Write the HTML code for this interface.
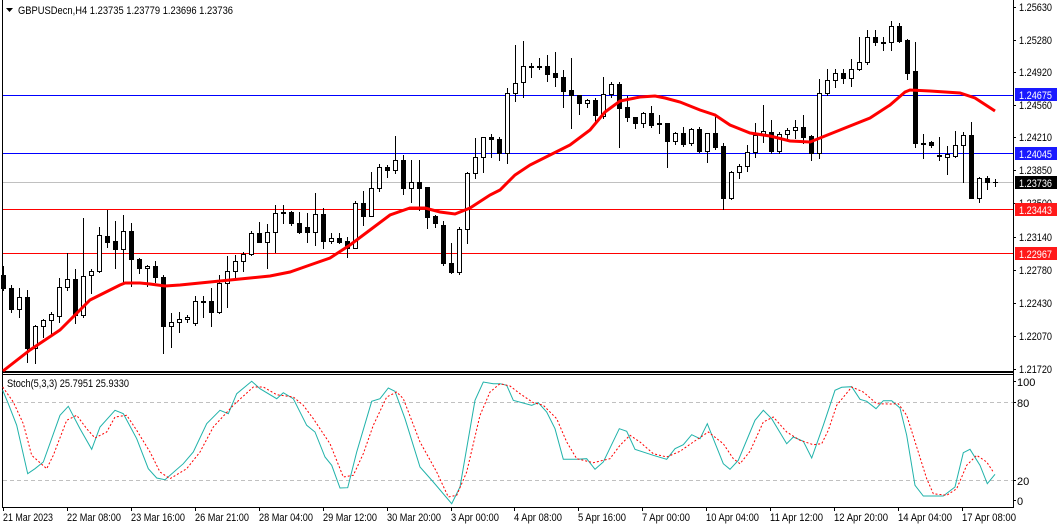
<!DOCTYPE html>
<html><head><meta charset="utf-8"><style>
html,body{margin:0;padding:0;background:#fff;width:1059px;height:528px;overflow:hidden}
svg{display:block;font-family:"Liberation Sans",sans-serif;font-size:11px}
</style></head><body>
<svg id="s" width="1059" height="528" xmlns="http://www.w3.org/2000/svg">
<rect x="0" y="0" width="1059" height="528" fill="#fff"/>
<g shape-rendering="crispEdges">
<line x1="2.5" y1="0" x2="2.5" y2="507" stroke="#000"/>
<line x1="1013.5" y1="0" x2="1013.5" y2="507" stroke="#000"/>
<line x1="2" y1="372" x2="1014" y2="372" stroke="#000" stroke-width="2"/>
<line x1="2" y1="374.5" x2="1014" y2="374.5" stroke="#000" stroke-width="1"/>
<line x1="2" y1="507.5" x2="1014" y2="507.5" stroke="#000"/>
<line x1="3" y1="95.5" x2="1013" y2="95.5" stroke="#0000ff"/>
<line x1="3" y1="153.5" x2="1013" y2="153.5" stroke="#0000ff"/>
<line x1="3" y1="182.5" x2="1013" y2="182.5" stroke="#c0c0c0"/>
<line x1="3" y1="209.5" x2="1013" y2="209.5" stroke="#ff0000"/>
<line x1="3" y1="253.5" x2="1013" y2="253.5" stroke="#ff0000"/>
</g>
<g id="candles" shape-rendering="crispEdges"></g>
<polyline fill="none" stroke="#ff0000" stroke-width="3" points="3,371 30,350 60,330 90,300 110,290 120,285 125,283 140,283 150,284 165,286 180,285 210,282 230,280 250,278 270,276 290,272 310,265 330,258 350,245 370,230 390,215 410,208 425,208 440,212 455,214 470,208 490,195 500,190 515,175 530,165 550,155 570,145 590,130 605,112 620,101 640,97 655,96 665,98 680,102 700,110 715,115 730,125 750,133 770,136 790,141 810,142 820,138 840,130 870,118 890,105 905,92 910,90 930,91 960,93 975,98 995,111"/>
<polygon points="6,8 13,8 9.5,12" fill="#000"/>
<text x="18" y="14" fill="#000" textLength="215" lengthAdjust="spacingAndGlyphs">GBPUSDecn,H4  1.23735 1.23779 1.23696 1.23736</text>
<g fill="#000" id="pax"></g>
<rect x="1015" y="88" width="42" height="13" fill="#1a1aff"/>
<text x="1019" y="99" fill="#fff" textLength="33" lengthAdjust="spacingAndGlyphs">1.24675</text>
<rect x="1015" y="147" width="42" height="13" fill="#1a1aff"/>
<text x="1019" y="158" fill="#fff" textLength="33" lengthAdjust="spacingAndGlyphs">1.24045</text>
<rect x="1015" y="176" width="42" height="13" fill="#000"/>
<text x="1019" y="187" fill="#fff" textLength="33" lengthAdjust="spacingAndGlyphs">1.23736</text>
<rect x="1015" y="203" width="42" height="13" fill="#ff1a1a"/>
<text x="1019" y="214" fill="#fff" textLength="33" lengthAdjust="spacingAndGlyphs">1.23443</text>
<rect x="1015" y="247" width="42" height="13" fill="#ff1a1a"/>
<text x="1019" y="258" fill="#fff" textLength="33" lengthAdjust="spacingAndGlyphs">1.22967</text>
<g shape-rendering="crispEdges">
<line x1="3" y1="402.5" x2="1013" y2="402.5" stroke="#c0c0c0" stroke-dasharray="4,3"/>
<line x1="3" y1="480.5" x2="1013" y2="480.5" stroke="#c0c0c0" stroke-dasharray="4,3"/>
</g>
<text x="7" y="387" fill="#000" textLength="122" lengthAdjust="spacingAndGlyphs">Stoch(5,3,3) 25.7951 25.9330</text>
<polyline id="teal" fill="none" stroke="#20b2aa" stroke-width="1"/>
<polyline id="red" fill="none" stroke="#ff0000" stroke-width="1" stroke-dasharray="2,2"/>
<g fill="#000">
<line x1="1013" y1="381.5" x2="1016" y2="381.5" stroke="#000"/><text x="1017" y="386">100</text>
<line x1="1013" y1="402.5" x2="1016" y2="402.5" stroke="#000"/><text x="1017" y="407">80</text>
<line x1="1013" y1="480.5" x2="1016" y2="480.5" stroke="#000"/><text x="1017" y="485">20</text>
<line x1="1013" y1="500.5" x2="1016" y2="500.5" stroke="#000"/><text x="1017" y="505">0</text>
</g>
<g id="tax" fill="#000"></g>
</svg>
<script>
var NS="http://www.w3.org/2000/svg";
function el(n,a,p){var e=document.createElementNS(NS,n);for(var k in a)e.setAttribute(k,a[k]);p.appendChild(e);return e;}
var d=[
"b 275 288 266 290","b 288 309 285 312","w 297 309 288 317","b 297 348 290 362","w 326 348 325 363","w 320 326 319 337","w 314 320 312 336","w 287 316 278 322","w 279 287 253 290","b 279 315 269 323",
"w 276 315 218 317","w 271 275 269 293","w 235 271 227 272","b 236 242 210 247","b 241 249 221 268","w 231 249 215 283","b 231 259 223 286","b 259 268 258 273","w 266 268 265 286","b 266 277 261 282",
"b 277 326 275 353","w 322 326 313 347","w 319 322 312 332","w 317 319 315 322","w 301 323 296 325","b 301 302 296 317","b 301 312 288 326","w 283 312 275 313","w 271 283 256 307","w 261 271 255 277",
"w 254 261 252 271","w 233 254 231 255","b 233 242 222 242","w 232 242 224 268","w 213 232 205 252","w 212 213 205 223","b 212 223 211 225","b 223 232 212 233","b 227 232 213 242","w 214 232 193 245",
"b 214 241 208 248","w 238 241 233 243","b 238 242 233 243","b 241 248 237 257","w 203 248 201 248","b 203 216 191 225","w 188 216 172 216","w 167 188 164 191","b 167 170 165 177","w 160 170 136 173",
"b 160 188 155 194","w 182 188 160 202","b 182 188 160 210","b 187 217 187 228","b 216 223 215 227","b 225 263 221 265","b 263 272 243 273","w 229 272 227 274","w 173 229 172 243","w 157 173 138 178",
"w 137 157 137 172","b 137 139 134 157","b 139 153 137 160","w 93 153 88 163","w 83 93 45 101","w 66 82 41 97","b 66 67 63 77","w 66 67 58 69","b 66 74 55 81","b 73 77 52 86",
"b 77 91 70 107","b 90 95 58 128","b 95 103 95 114","w 100 103 99 107","b 100 115 98 123","w 94 116 77 118","w 84 94 82 97","b 84 108 82 147","b 107 117 96 121","b 117 123 117 128",
"w 113 123 112 127","b 113 125 106 127","b 123 124 115 133","b 123 141 123 167","w 133 141 132 144","b 133 144 127 146","w 129 143 128 145","b 129 151 127 152","w 133 151 133 162","b 133 147 117 149",
"b 146 198 143 209","w 172 198 171 199","w 166 172 164 178","w 152 166 145 171","w 135 152 123 157","w 131 135 105 142","b 132 151 120 153","w 134 151 132 153","w 130 134 128 138","w 127 130 120 138",
"b 127 137 115 143","b 136 153 135 160","w 93 153 79 158","w 80 93 69 95","w 73 80 69 87","b 73 78 69 83","w 69 78 59 86","w 62 69 37 70","w 37 62 30 64","b 37 42 30 45",
"b 42 43 37 50","w 26 42 21 50","b 26 41 23 42","b 40 73 39 79","b 71 143 42 147","b 143 144 134 158","b 142 145 141 147","b 155 156 137 160","w 154 157 146 174","w 145 156 131 157",
"w 135 145 132 182","b 135 198 122 198","w 178 198 177 202","b 178 182 176 189","b 182 182 179 186"];
var g=document.getElementById("candles");
d.forEach(function(s,k){var p=s.split(" "),t=+p[1],b=+p[2],h=+p[3],l=+p[4],x=3.5+8*k;
el("line",{x1:x,y1:h,x2:x,y2:l+1,stroke:"#000"},g);
if(b-t<1){el("line",{x1:x-2.5,y1:t+0.5,x2:x+2.5,y2:t+0.5,stroke:"#000"},g);}
else el("rect",{x:x-2,y:t+0.5,width:4,height:b-t,fill:p[0]=="b"?"#000":"#fff",stroke:"#000"},g);});
var pax=document.getElementById("pax");
[["1.25630",7],["1.25280",40],["1.24920",72],["1.24560",105],["1.24210",137],["1.23850",170],["1.23500",203],["1.23140",237],["1.22780",270],["1.22430",303],["1.22070",336],["1.21720",369]].forEach(function(a){
el("line",{x1:1013,y1:a[1]+.5,x2:1016,y2:a[1]+.5,stroke:"#000"},pax);var t=el("text",{x:1019,y:a[1]+4,textLength:33,lengthAdjust:"spacingAndGlyphs"},pax);t.textContent=a[0];});
function pts(arr,ox){return arr.map(function(p){return (ox+p[0]/3).toFixed(1)+","+(372+p[1]/3).toFixed(1)}).join(" ");}
var t1=[[8,55],[25,95],[50,160],[83,305],[105,290],[130,270],[180,130],[205,103],[240,170],[275,232],[300,165],[345,115],[370,125],[410,200],[445,290],[470,318],[495,323],[550,275],[580,240],[620,155],[660,115],[685,125],[710,65],[755,28],[780,50],[830,80],[850,62],[880,80],[920,160],[945,180],[975,255],[995,280],[1020,348],[1043,347],[1070,240],[1115,88],[1140,80],[1165,48],[1185,58],[1215,140],[1260,285],[1300,330],[1355,395],[1380,345],[1425,85],[1450,30],[1480,35],[1500,35]];
var t2=[[0,35],[20,40],[40,85],[95,100],[115,92],[140,120],[165,170],[190,262],[230,262],[260,260],[285,292],[310,270],[358,170],[380,178],[405,232],[460,250],[500,262],[525,230],[550,218],[575,188],[600,200],[622,155],[670,275],[690,292],[715,265],[765,145],[790,115],[815,140],[860,215],[880,195],[910,208],[935,258],[970,160],[1005,55],[1025,46],[1055,44],[1080,82],[1100,88],[1128,110],[1150,86],[1175,86],[1200,108],[1220,190],[1245,340],[1270,372],[1330,372],[1365,345],[1390,242],[1410,232],[1440,280],[1462,335],[1485,307]];
var r1=[[8,45],[40,90],[70,155],[95,250],[140,290],[160,250],[200,145],[230,130],[260,170],[285,198],[320,180],[345,135],[380,130],[410,175],[450,240],[480,300],[510,320],[560,290],[600,240],[640,165],[700,100],[760,45],[790,45],[830,68],[880,75],[910,100],[940,140],[990,215],[1030,315],[1060,310],[1090,245],[1120,160],[1160,75],[1190,60],[1210,80],[1260,210],[1310,300],[1345,375],[1370,370],[1400,300],[1440,130],[1470,60],[1500,35]];
var r2=[[0,35],[30,42],[60,65],[100,92],[130,100],[170,140],[200,210],[230,260],[280,272],[330,260],[360,220],[390,190],[420,210],[460,245],[500,255],[540,238],[580,210],[625,180],[670,215],[700,260],[720,275],[750,238],[790,150],[820,135],[860,180],[900,205],[940,218],[965,215],[985,175],[1010,100],[1055,45],[1090,60],[1130,95],[1170,96],[1195,95],[1220,130],[1250,225],[1280,320],[1300,365],[1340,370],[1370,350],[1400,280],[1430,250],[1460,270],[1480,300]];
document.getElementById("teal").setAttribute("points",pts(t1,0)+" "+pts(t2,500));
document.getElementById("red").setAttribute("points",pts(r1,0)+" "+pts(r2,500));
var tax=document.getElementById("tax");
[["21 Mar 2023",3,50],["22 Mar 08:00",67,54],["23 Mar 16:00",131,54],["26 Mar 21:00",195,54],["28 Mar 04:00",259,54],["29 Mar 12:00",323,54],["30 Mar 20:00",387,54],["3 Apr 00:00",451,48],["4 Apr 08:00",514,48],["5 Apr 16:00",578,48],["7 Apr 00:00",642,48],["10 Apr 04:00",706,53],["11 Apr 12:00",770,53],["12 Apr 20:00",834,54],["14 Apr 04:00",898,54],["17 Apr 08:00",962,54]].forEach(function(a){
el("line",{x1:a[1]+.5,y1:507,x2:a[1]+.5,y2:511,stroke:"#000"},tax);var t=el("text",{x:a[1],y:521,textLength:a[2],lengthAdjust:"spacingAndGlyphs"},tax);t.textContent=a[0];});
</script>
</body></html>
